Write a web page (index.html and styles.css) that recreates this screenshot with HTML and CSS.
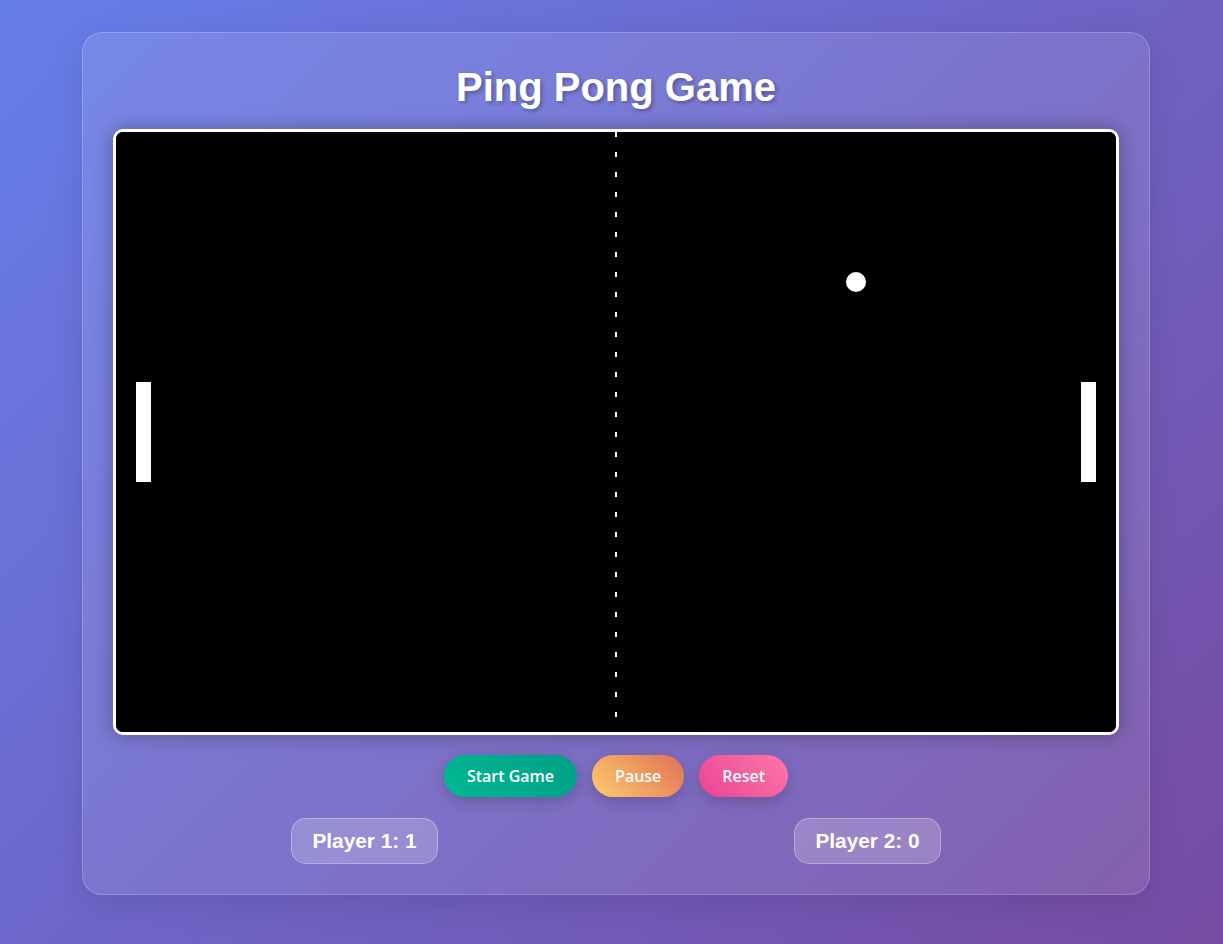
FILE: index.html
```html
<!DOCTYPE html>
<html lang="en">
<head>
<meta charset="utf-8">
<title>Ping Pong Game</title>
<link rel="stylesheet" href="styles.css">
</head>
<body>
  <main class="card">
    <h1 class="title">Ping Pong Game</h1>
    <div class="board">
      <svg class="field" width="1000" height="600" viewBox="0 0 1000 600" xmlns="http://www.w3.org/2000/svg">
        <rect x="0" y="0" width="1000" height="600" fill="#000"/>
        <line x1="500" y1="0" x2="500" y2="600" stroke="#fff" stroke-width="2" stroke-dasharray="5 15"/>
        <rect x="20" y="250" width="15" height="100" fill="#fff"/>
        <rect x="965" y="250" width="15" height="100" fill="#fff"/>
        <circle cx="740" cy="150" r="10" fill="#fff"/>
      </svg>
    </div>
    <div class="controls">
      <button class="btn btn-start">Start Game</button>
      <button class="btn btn-pause">Pause</button>
      <button class="btn btn-reset">Reset</button>
    </div>
    <div class="scores">
      <div class="score">Player 1: 1</div>
      <div class="score">Player 2: 0</div>
    </div>
  </main>
</body>
</html>
```
FILE: styles.css
```css
html, body {
  margin: 0;
}
body {
  min-height: 100vh;
  box-sizing: border-box;
  padding: 32px 0 0 9px;
  display: flex;
  justify-content: center;
  align-items: flex-start;
  background: linear-gradient(135deg, #667eea 0%, #764ba2 100%);
  font-family: "Liberation Sans", Arial, sans-serif;
}
.card {
  box-sizing: border-box;
  width: 1068px;
  padding: 30px;
  border-radius: 20px;
  background: rgba(255, 255, 255, 0.1);
  border: 1px solid rgba(255, 255, 255, 0.2);
  box-shadow: 0 8px 32px rgba(0, 0, 0, 0.1);
  display: flex;
  flex-direction: column;
  align-items: stretch;
}
.title {
  margin: 0 0 17px;
  text-align: center;
  color: #fff;
  font-size: 40px;
  font-weight: bold;
  line-height: 49px;
  text-shadow: 2px 2px 4px rgba(0, 0, 0, 0.3);
}
.board {
  width: 1000px;
  height: 600px;
  border: 3px solid #fff;
  border-radius: 10px;
  overflow: hidden;
  background: #000;
  box-shadow: 0 0 20px rgba(0, 0, 0, 0.3);
}
.field {
  display: block;
}
.controls {
  margin-top: 20px;
  display: flex;
  justify-content: center;
  gap: 15px;
}
.btn {
  border: none;
  border-radius: 25px;
  padding: 12px 23px;
  font-family: "Open Sans", "Noto Sans", sans-serif;
  font-size: 16px;
  font-weight: 600;
  line-height: 18px;
  color: #fff;
  cursor: pointer;
  box-shadow: 0 4px 15px rgba(0, 0, 0, 0.2);
}
.btn-start {
  background: linear-gradient(45deg, #00b894, #00a085);
}
.btn-pause {
  background: linear-gradient(45deg, #fdcb6e, #e17055);
}
.btn-reset {
  background: linear-gradient(45deg, #e84393, #fd79a8);
}
.scores {
  margin-top: 21px;
  display: flex;
  justify-content: space-around;
}
.score {
  padding: 10px 20px;
  border-radius: 15px;
  background: rgba(255, 255, 255, 0.2);
  border: 1px solid rgba(255, 255, 255, 0.3);
  color: #fff;
  font-size: 20.8px;
  font-weight: bold;
  line-height: 24px;
}
```
